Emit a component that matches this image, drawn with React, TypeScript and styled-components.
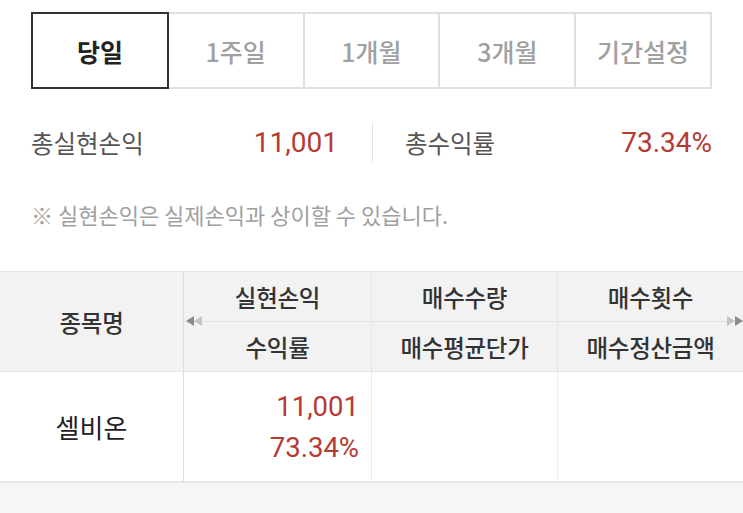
import React from "react";
import styled, { createGlobalStyle } from "styled-components";

const Global = createGlobalStyle`
  html, body { margin: 0; padding: 0; background: #ffffff; }
  body { font-family: Roboto, "Noto Sans CJK KR", sans-serif; }
  * { box-sizing: border-box; }
`;

const Page = styled.div`
  width: 743px;
  min-height: 513px;
  display: flex;
  flex-direction: column;
  background: #f6f6f6;
`;

const Top = styled.div`
  background: #fff;
  padding: 12px 31px 0 31px;
`;

const Tabs = styled.div`
  display: flex;
  height: 77px;
`;

const Tab = styled.div<{ $active?: boolean }>`
  flex: 1;
  display: flex;
  align-items: center;
  justify-content: center;
  border: 2px solid ${(p) => (p.$active ? "#333" : "#e0e0e0")};
  margin-left: -2px;
  &:first-child { margin-left: 0; }
  position: relative;
  z-index: ${(p) => (p.$active ? 1 : 0)};
  font-family: "Noto Sans CJK KR", sans-serif;
  font-size: 25px;
  font-weight: ${(p) => (p.$active ? 700 : 500)};
  color: ${(p) => (p.$active ? "#222" : "#a0a0a0")};
`;

const Summary = styled.div`
  display: flex;
  margin-top: 33px;
  height: 40px;
`;

const SumCell = styled.div<{ $right?: boolean }>`
  flex: 1;
  display: flex;
  align-items: center;
  justify-content: space-between;
  padding: ${(p) => (p.$right ? "0 0 0 32px" : "0 34px 0 0")};
  border-left: ${(p) => (p.$right ? "1px solid #e6e6e6" : "none")};
`;

const SumLabel = styled.span`
  font-family: "Noto Sans CJK KR", sans-serif;
  font-size: 24.5px;
  color: #555;
`;

const SumValue = styled.span`
  font-family: Roboto, sans-serif;
  font-size: 28px;
  color: #b53a33;
`;

const Note = styled.div`
  margin-top: 38px;
  height: 28px;
  line-height: 28px;
  font-family: "Noto Sans CJK KR", sans-serif;
  font-size: 22px;
  color: #a0a0a0;
`;

const Spacer = styled.div`
  height: 43px;
  background: #fff;
`;

const Table = styled.div`
  position: relative;
  display: grid;
  grid-template-columns: 184px 188px 186px 185px;
  background: #fff;
`;

const HeadCell = styled.div<{ $first?: boolean }>`
  background: #f2f2f2;
  border-top: 1px solid #e6e6e6;
  border-right: 1px solid ${(p) => (p.$first ? "#dcdcdc" : "#e6e6e6")};
  display: flex;
  flex-direction: column;
  height: 100px;
  font-family: "Noto Sans CJK KR", sans-serif;
  font-size: 23.5px;
  font-weight: 500;
  color: #333;
  letter-spacing: -0.3px;
  &:nth-child(4) { border-right: none; }
`;

const HeadSub = styled.div<{ $top?: boolean }>`
  flex: 1;
  display: flex;
  align-items: center;
  justify-content: center;
  border-bottom: ${(p) => (p.$top ? "1px solid #e2e2e2" : "none")};
`;

const BodyCell = styled.div<{ $first?: boolean }>`
  height: 112px;
  border-top: 1px solid #e6e6e6;
  border-bottom: 2px solid #e8e8e8;
  border-right: 1px solid ${(p) => (p.$first ? "#dcdcdc" : "#ececec")};
  display: flex;
  flex-direction: column;
  justify-content: center;
  align-items: ${(p) => (p.$first ? "center" : "flex-end")};
  padding-right: ${(p) => (p.$first ? "0" : "12px")};
  &:nth-child(8) { border-right: none; }
`;

const Name = styled.span`
  font-family: "Noto Sans CJK KR", sans-serif;
  font-size: 26px;
  color: #222;
`;

const Num = styled.span`
  font-family: Roboto, sans-serif;
  font-size: 27.5px;
  line-height: 41px;
  color: #b53a33;
`;

const Arrow = styled.div<{ $side: "left" | "right" }>`
  position: absolute;
  top: 45px;
  ${(p) => (p.$side === "left" ? "left: 186px;" : "right: 0;")}
  display: flex;
`;

const Tri = styled.div<{ $dir: "left" | "right"; $shade: string }>`
  width: 0;
  height: 0;
  border-top: 5px solid transparent;
  border-bottom: 5px solid transparent;
  ${(p) =>
    p.$dir === "left"
      ? `border-right: 8px solid ${p.$shade};`
      : `border-left: 8px solid ${p.$shade};`}
`;

const Bottom = styled.div`
  flex: 1;
  background: #f6f6f6;
`;

const tabs = ["당일", "1주일", "1개월", "3개월", "기간설정"];

export default function App() {
  return (
    <Page>
      <Global />
      <Top>
        <Tabs>
          {tabs.map((t, i) => (
            <Tab key={t} $active={i === 0}>
              {t}
            </Tab>
          ))}
        </Tabs>
        <Summary>
          <SumCell>
            <SumLabel>총실현손익</SumLabel>
            <SumValue>11,001</SumValue>
          </SumCell>
          <SumCell $right>
            <SumLabel>총수익률</SumLabel>
            <SumValue>73.34%</SumValue>
          </SumCell>
        </Summary>
        <Note>※ 실현손익은 실제손익과 상이할 수 있습니다.</Note>
      </Top>
      <Spacer />
      <Table>
        <HeadCell $first>
          <HeadSub>종목명</HeadSub>
        </HeadCell>
        <HeadCell>
          <HeadSub $top>실현손익</HeadSub>
          <HeadSub>수익률</HeadSub>
        </HeadCell>
        <HeadCell>
          <HeadSub $top>매수수량</HeadSub>
          <HeadSub>매수평균단가</HeadSub>
        </HeadCell>
        <HeadCell>
          <HeadSub $top>매수횟수</HeadSub>
          <HeadSub>매수정산금액</HeadSub>
        </HeadCell>
        <BodyCell $first>
          <Name>셀비온</Name>
        </BodyCell>
        <BodyCell>
          <Num>11,001</Num>
          <Num>73.34%</Num>
        </BodyCell>
        <BodyCell />
        <BodyCell />
        <Arrow $side="left">
          <Tri $dir="left" $shade="#8a8a8a" />
          <Tri $dir="left" $shade="#c4c4c4" />
        </Arrow>
        <Arrow $side="right">
          <Tri $dir="right" $shade="#c4c4c4" />
          <Tri $dir="right" $shade="#8a8a8a" />
        </Arrow>
      </Table>
      <Bottom />
    </Page>
  );
}
